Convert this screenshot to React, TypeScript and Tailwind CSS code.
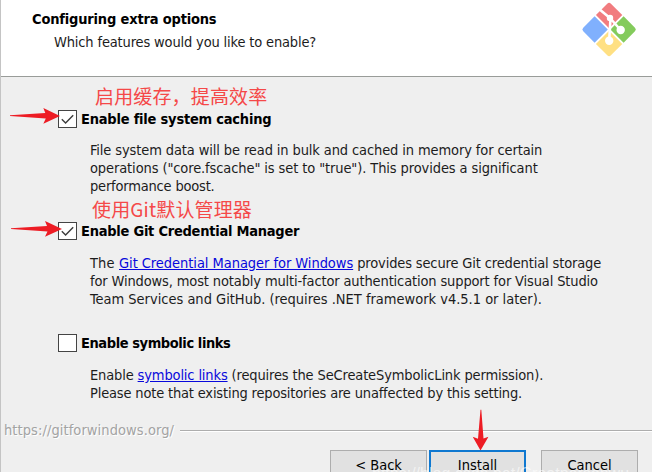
import type { ReactNode } from "react";

function GitLogo() {
  return (
    <svg viewBox="0 0 92 90" className="h-[90px] w-[92px]" aria-hidden="true">
      <g transform="translate(49.100 29.500) rotate(45) scale(1.030)">
        <path d="M-0.900-19v18.100h-18.100v-15.600q0-2.500 2.500-2.500z" fill="#f17c7f" />
        <path d="M0.900-19h15.600q2.500 0 2.500 2.500v15.600h-18.100z" fill="#84cb5c" />
        <path d="M-19 0.900h18.100v18.100h-15.600q-2.500 0-2.500-2.500z" fill="#80b0fd" />
        <path d="M0.900 0.900h18.100v15.600q0 2.500-2.500 2.500h-15.600z" fill="#ffe083" />
      </g>
      <path
        d="M38.500 8.500L50.500 18.500M50.500 18.500L49.200 40.500M50.500 18.500L60.500 30"
        stroke="#fff"
        strokeWidth="2.600"
        fill="none"
      />
      <circle cx="50" cy="18" r="3.200" fill="#fff" />
      <circle cx="60.700" cy="30" r="4.200" fill="#fff" />
      <circle cx="49.200" cy="40.800" r="4.200" fill="#fff" />
    </svg>
  );
}

function Arrow({ className }: { className: string }) {
  return (
    <svg viewBox="0 0 51 16" preserveAspectRatio="none" className={className} aria-hidden="true">
      <path d="M0 7.200L36 5 34 0 51 8 34 15.800 36.500 10.500 0 8z" fill="#ed1c24" />
    </svg>
  );
}

function CheckRow({ checked, children }: { checked?: boolean; children: ReactNode }) {
  return (
    <div className="flex h-[18px] items-center gap-1 pl-[58px] font-bold text-black">
      <span className="flex h-[18px] w-[19px] items-center justify-center border border-[#444] bg-white">
        {checked && (
          <svg viewBox="0 0 17 16" className="h-4 w-[17px]" aria-hidden="true">
            <path d="M2.800 8.200L6.600 12 14.200 4.200" fill="none" stroke="#3c3c3c" strokeWidth="1.400" />
          </svg>
        )}
      </span>
      {children}
    </div>
  );
}

function Note({ children }: { children: ReactNode }) {
  return (
    <p className="h-6 font-['Noto_Sans_CJK_SC',sans-serif] text-[19px] leading-6 tracking-[0.150px] text-[#f54848]">
      {children}
    </p>
  );
}

export default function App() {
  return (
    <main className="relative flex h-[472px] w-[652px] flex-col overflow-hidden border-l border-[#c4c4c4] bg-[#efefef] font-['DejaVu_Sans_Condensed','Liberation_Sans',sans-serif] text-[14.500px] leading-[18px] whitespace-nowrap text-[#1c1c1c]">
      <header className="flex h-[77px] shrink-0 justify-between border-b border-[#999c99] bg-white">
        <div className="pt-[10px] pl-[31px]">
          <h1 className="font-bold tracking-[-0.180px] text-black">Configuring extra options</h1>
          <p className="mt-[5px] ml-[22px] tracking-[-0.155px]">Which features would you like to enable?</p>
        </div>
        <div className="h-[76px] overflow-hidden">
          <GitLogo />
        </div>
      </header>

      <section className="flex h-[345px] shrink-0 flex-col pt-[7px]">
        <div className="pl-[94px]">
          <Note>启用缓存，提高效率</Note>
        </div>
        <div className="-ml-px pt-[2px]">
          <CheckRow checked>
            <span className="tracking-[-0.220px]">Enable file system caching</span>
          </CheckRow>
        </div>
        <div className="mt-[13px] pl-[89px]">
          <p className="tracking-[-0.116px]">File system data will be read in bulk and cached in memory for certain</p>
          <p className="tracking-[-0.106px]">operations ("core.fscache" is set to "true"). This provides a significant</p>
          <p className="tracking-[-0.190px]">performance boost.</p>
        </div>

        <div className="mt-[2px] pl-[91px]">
          <Note>使用Git默认管理器</Note>
        </div>
        <div className="-ml-px pt-px">
          <CheckRow checked>
            <span className="tracking-[-0.250px]">Enable Git Credential Manager</span>
          </CheckRow>
        </div>
        <div className="mt-[14px] pl-[89px]">
          <p className="tracking-[-0.140px]">
            <span className="tracking-[0.150px]">The </span>
            <a className="tracking-[-0.050px] text-[#0808dc] underline">Git Credential Manager for Windows</a>{" "}
            provides secure Git credential storage
          </p>
          <p className="tracking-[-0.136px]">
            for Windows, most notably multi-factor authentication support for Visual Studio
          </p>
          <p className="tracking-[-0.010px]">
            Team Services and GitHub. (requires .NET framework v4.5.1 or later).
          </p>
        </div>

        <div className="-ml-px pt-[26px]">
          <CheckRow>
            <span className="tracking-[-0.420px]">Enable symbolic links</span>
          </CheckRow>
        </div>
        <div className="mt-[14px] pl-[89px]">
          <p className="tracking-[-0.141px]">
            Enable <a className="text-[#0808dc] underline">symbolic links</a> (requires the SeCreateSymbolicLink
            permission).
          </p>
          <p className="tracking-[-0.170px]">
            Please note that existing repositories are unaffected by this setting.
          </p>
        </div>
      </section>

      <div className="flex h-[17px] shrink-0 items-center gap-[6px] pl-[3px]">
        <span className="-mt-[2px] tracking-[0.080px] text-[#a3a3a3] [text-shadow:1px_1px_0_#fff]">
          https://gitforwindows.org/
        </span>
        <div className="h-[2px] flex-1 border-t border-b border-t-[#adadad] border-b-white" />
      </div>

      <footer className="mt-[11px] flex h-[22px] shrink-0 items-start overflow-hidden pl-[329px] text-black">
        <button className="h-[29px] w-[97px] border border-[#adadad] bg-[#e1e1e1]">&lt; Back</button>
        <button className="ml-[2px] h-[29px] w-[97px] border-2 border-[#0f78d0] bg-[#e1e1e1]">Install</button>
        <button className="ml-[15px] h-[29px] w-[97px] border border-[#adadad] bg-[#e1e1e1]">Cancel</button>
      </footer>

      <Arrow className="absolute top-[108px] left-[9px] h-4 w-[50px]" />
      <Arrow className="absolute top-[221px] left-[10px] h-4 w-[51px]" />
      <Arrow className="absolute top-[422px] left-[459px] h-4 w-[41px] rotate-90" />
      <span className="absolute top-[465px] left-[371px] font-['Liberation_Sans',sans-serif] text-[16px] text-white/60">
        https://blog.csdn.net/Greatpersonwu
      </span>
    </main>
  );
}
